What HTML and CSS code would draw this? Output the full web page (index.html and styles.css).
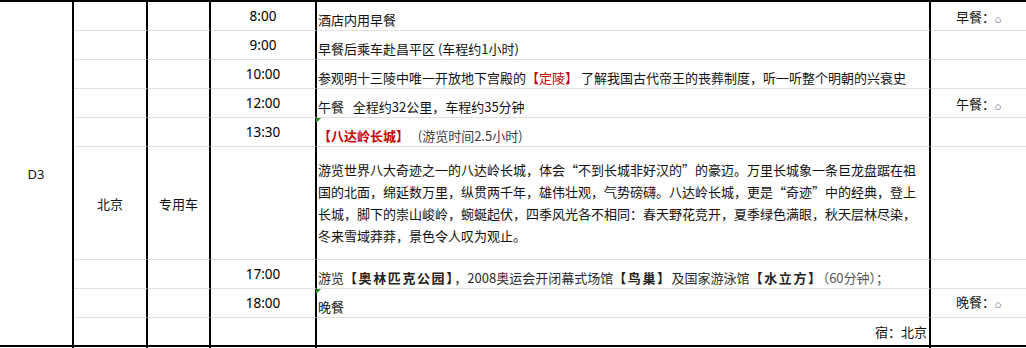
FILE: index.html
```html
<!DOCTYPE html>
<html lang="zh-CN">
<head>
<meta charset="utf-8">
<title>D3 行程</title>
<link rel="stylesheet" href="styles.css">
</head>
<body>
<div class="sheet">
  <div class="c day">D3</div>

  <div class="c"></div><div class="c"></div>
  <div class="c t">8:00</div>
  <div class="c d"><span>酒店内用早餐</span></div>
  <div class="c m"><span>早餐：<span class="o">○</span></span></div>

  <div class="c"></div><div class="c"></div>
  <div class="c t">9:00</div>
  <div class="c d"><span>早餐后乘车赴昌平区 (车程约1小时)</span></div>
  <div class="c m"></div>

  <div class="c"></div><div class="c"></div>
  <div class="c t">10:00</div>
  <div class="c d"><span>参观明十三陵中唯一开放地下宫殿的<span class="red">【定陵】</span> 了解我国古代帝王的丧葬制度，听一听整个明朝的兴衰史</span></div>
  <div class="c m"></div>

  <div class="c"></div><div class="c"></div>
  <div class="c t">12:00</div>
  <div class="c d"><span>午餐   全程约32公里，车程约35分钟</span></div>
  <div class="c m"><span>午餐：<span class="o">○</span></span></div>

  <div class="c"></div><div class="c"></div>
  <div class="c t">13:30</div>
  <div class="c d note"><span><span class="red b">【八达岭长城】</span>   <span class="gray">(游览时间2.5小时)</span></span></div>
  <div class="c m"></div>

  <div class="c ctr">北京</div>
  <div class="c ctr">专用车</div>
  <div class="c t"></div>
  <div class="c para"><p class="ptext">游览世界八大奇迹之一的八达岭长城，体会“不到长城非好汉的”的豪迈。万里长城象一条巨龙盘踞在祖<br>国的北面，绵延数万里，纵贯两千年，雄伟壮观，气势磅礴。八达岭长城，更是“奇迹”中的经典，登上<br>长城，脚下的崇山峻岭，蜿蜒起伏，四季风光各不相同：春天野花竞开，夏季绿色满眼，秋天层林尽染，<br>冬来雪域莽莽，景色令人叹为观止。</p></div>
  <div class="c m"></div>

  <div class="c"></div><div class="c"></div>
  <div class="c t">17:00</div>
  <div class="c d dk"><span>游览<span class="bw">【奥林匹克公园】</span>，2008奥运会开闭幕式场馆<span class="bw">【鸟巢】</span>及国家游泳馆<span class="bw">【水立方】</span><span class="gray2">（60分钟）；</span></span></div>
  <div class="c m"></div>

  <div class="c"></div><div class="c"></div>
  <div class="c t">18:00</div>
  <div class="c d note"><span>晚餐</span></div>
  <div class="c m low"><span>晚餐：<span class="o">○</span></span></div>

  <div class="c r9"></div><div class="c r9"></div>
  <div class="c t r9"></div>
  <div class="c stay r9"><span>宿：北京</span></div>
  <div class="c m r9"></div>
</div>
<div class="tail">
  <div></div><div></div><div></div><div></div><div></div><div></div>
</div>
</body>
</html>
```

FILE: styles.css
```css
html, body {
  margin: 0;
  padding: 0;
  background: #ffffff;
}

body {
  font-family: "Noto Sans CJK SC", sans-serif;
  font-size: 13px;
  color: #111111;
}

.sheet {
  display: grid;
  grid-template-columns: 74px 74px 63px 106px 614px 95px;
  grid-template-rows: 29px 29px 29px 29px 29px 113px 29px 29px 27px;
  border-top: 2px solid #000000;
  border-bottom: 2px solid #000000;
  width: 1026px;
}

.c {
  box-sizing: border-box;
  border-bottom: 1px solid #e1e1e1;
  border-right: 2px solid #000000;
  display: flex;
  align-items: center;
  white-space: pre;
  position: relative;
  min-width: 0;
}

.c.m {
  border-right: none;
  justify-content: center;
}

.c.r9 {
  border-bottom: none;
}

.day {
  grid-row: 1 / 10;
  grid-column: 1;
  border-bottom: none;
  justify-content: center;
  font-family: "Noto Sans", "Noto Sans CJK SC", sans-serif;
  font-size: 13px;
}

.t {
  justify-content: center;
  font-family: "Noto Sans", "Noto Sans CJK SC", sans-serif;
  font-size: 13.5px;
  color: #000000;
  padding-bottom: 1px;
}

.d {
  align-items: flex-end;
  padding: 0 0 2px 1px;
  line-height: 17px;
}

.ctr {
  justify-content: center;
}

.para {
  white-space: normal;
  padding-left: 1px;
}

.ptext {
  margin: 0;
  line-height: 22px;
  font-feature-settings: "fwid" 1;
}

.stay {
  justify-content: flex-end;
  padding-right: 2px;
}

.low {
  align-items: flex-end;
  padding-bottom: 3px;
  line-height: 17px;
}

.o {
  font-family: "DejaVu Sans", sans-serif;
  font-size: 7px;
}

.red {
  color: #c80000;
}

.b {
  font-weight: 700;
}

.bw {
  font-weight: 700;
  letter-spacing: 1.6px;
  color: #222222;
}

.dk {
  color: #2a2a2a;
}

.gray {
  color: #404040;
}

.gray2 {
  color: #555555;
}

.note::before {
  content: "";
  position: absolute;
  left: -1px;
  top: 0;
  width: 0;
  height: 0;
  border-top: 5px solid #1c8c1c;
  border-right: 5px solid transparent;
}

.tail {
  display: grid;
  grid-template-columns: 74px 74px 63px 106px 614px 95px;
  height: 6px;
  width: 1026px;
}

.tail > div {
  box-sizing: border-box;
  border-right: 2px solid #000000;
}

.tail > div:last-child {
  border-right: none;
}
```
